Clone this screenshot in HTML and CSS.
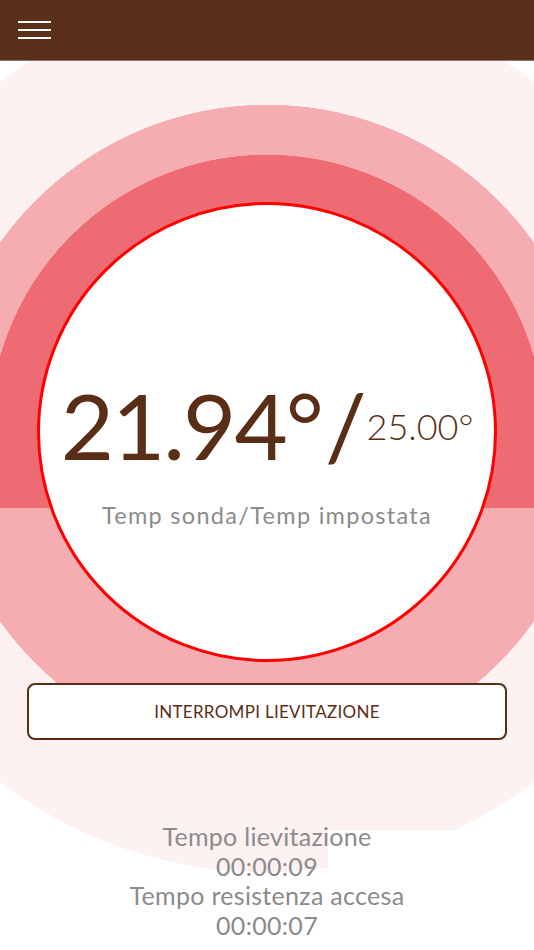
FILE: index.html
```html
<!DOCTYPE html>
<html>

<head>
    <meta charset="utf-8">
    <title>Lievitazione</title>
    <link rel="stylesheet" href="styles.css">
</head>

<body>
    <header class="topbar">
        <button class="menu-btn" aria-label="Menu">
            <span></span><span></span><span></span>
        </button>
    </header>

    <main class="screen">
        <div class="gauge">
            <div class="dial">
                <div class="reading"><span class="temp-now">21.94°</span><span class="slash">/</span><span class="temp-set">25.00°</span></div>
                <div class="dial-label">Temp sonda/Temp impostata</div>
            </div>
        </div>

        <div class="actions">
            <button class="btn-stop">INTERROMPI LIEVITAZIONE</button>
        </div>

        <div class="timers">
            <div>Tempo lievitazione</div>
            <div>00:00:09</div>
            <div>Tempo resistenza accesa</div>
            <div>00:00:07</div>
        </div>
    </main>
</body>

</html>
```

FILE: styles.css
```css
html,
body {
    margin: 0;
    overflow: hidden;
}

body {
    background: #fff;
    font-family: "Lato", "Liberation Sans", sans-serif;
}

.topbar {
    position: relative;
    z-index: 1;
    height: 61px;
    box-sizing: border-box;
    background: #5b301a;
    border-bottom: 1px solid #8c7466;
    padding: 21px 0 0 18px;
}

.menu-btn {
    display: flex;
    flex-direction: column;
    gap: 6px;
    width: 33px;
    padding: 0;
    background: none;
    border: 0;
    cursor: pointer;
}

.menu-btn span {
    display: block;
    height: 2px;
    width: 100%;
    background: #fff;
    box-shadow: 0 0 1px rgba(0, 0, 0, 0.4);
}

/* rings: fill ring cut at the level line, mid ring cut under the button */
.gauge {
    display: flex;
    align-items: center;
    justify-content: center;
    height: 880px;
    margin-top: -69px;
    margin-bottom: -189px;
    background:
        radial-gradient(circle at 50% 440px, #ef6b73 277px, transparent 277.5px) 0 0 / 100% 516px no-repeat,
        radial-gradient(circle at 50% 440px, #f5adb2 327px, transparent 327.5px) 0 0 / 100% 748px no-repeat,
        radial-gradient(circle at 50% 440px, #fdf1f2 440px, transparent 440.5px) 0 0 / 100% 100% no-repeat;
}

.dial {
    width: 460px;
    height: 460px;
    flex-shrink: 0;
    box-sizing: border-box;
    border: 3px solid #ff0000;
    border-radius: 50%;
    background: #fff;
    display: flex;
    flex-direction: column;
    align-items: center;
    justify-content: center;
    padding-top: 44px;
}

.reading {
    color: #5a2e16;
    white-space: nowrap;
    line-height: 1;
}

.temp-now {
    font-size: 92px;
    letter-spacing: -2px;
}

.slash {
    font-size: 92px;
    margin: 0 0 0 3px;
}

.temp-set {
    font-size: 36px;
    font-weight: 300;
    vertical-align: 20px;
}

.dial-label {
    margin-top: 30px;
    font-size: 23.5px;
    letter-spacing: 1.3px;
    color: #8b8b8b;
}

.actions {
    padding: 0 27px;
}

.btn-stop {
    display: block;
    width: 100%;
    height: 57px;
    box-sizing: border-box;
    background: #fff;
    border: 2px solid #5a2e16;
    border-radius: 8px;
    color: #5a2e16;
    font-family: inherit;
    font-size: 17px;
    letter-spacing: 0.3px;
    cursor: pointer;
}

.timers {
    margin-top: 82px;
    text-align: center;
    font-size: 25px;
    letter-spacing: 0.3px;
    line-height: 29.5px;
    color: #8b8b8b;
    background: linear-gradient(#fff, #fff) no-repeat 328px 8px;
}
```
